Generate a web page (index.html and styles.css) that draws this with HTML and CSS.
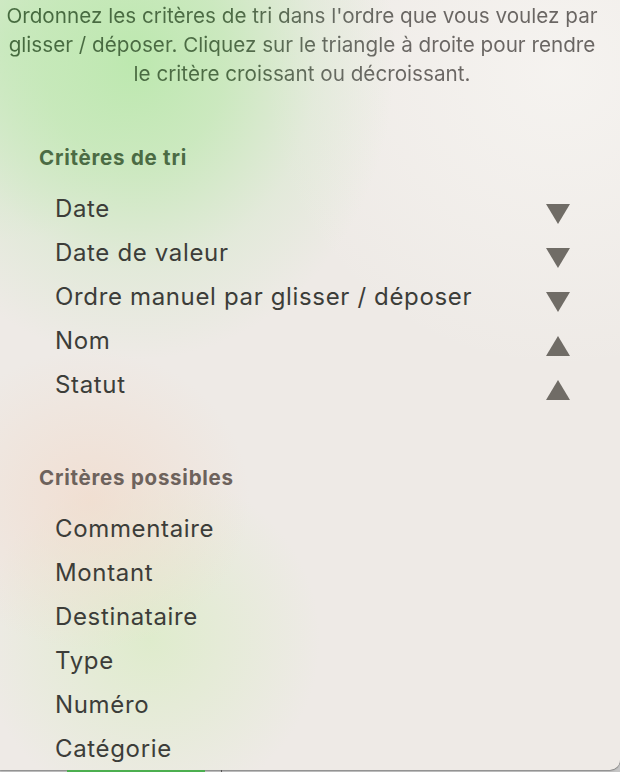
FILE: index.html
```html
<!DOCTYPE html>
<html lang="fr">
<head>
<meta charset="utf-8">
<title>Critères de tri</title>
<link rel="stylesheet" href="styles.css">
</head>
<body>
<div class="panel">
  <p class="intro">Ordonnez les critères de tri dans l'ordre que vous voulez par glisser / déposer. Cliquez sur le triangle à droite pour rendre le critère croissant ou décroissant.</p>

  <section class="group group-active">
    <h2 class="group-title title-active">Critères de tri</h2>
    <ul class="rows">
      <li class="row"><span class="label">Date</span><svg class="tri" viewBox="0 0 24 20" width="24" height="20"><polygon points="0,0 24,0 12,20"/></svg></li>
      <li class="row"><span class="label">Date de valeur</span><svg class="tri" viewBox="0 0 24 20" width="24" height="20"><polygon points="0,0 24,0 12,20"/></svg></li>
      <li class="row"><span class="label">Ordre manuel par glisser / déposer</span><svg class="tri" viewBox="0 0 24 20" width="24" height="20"><polygon points="0,0 24,0 12,20"/></svg></li>
      <li class="row"><span class="label">Nom</span><svg class="tri" viewBox="0 0 24 20" width="24" height="20"><polygon points="12,0 24,20 0,20"/></svg></li>
      <li class="row"><span class="label">Statut</span><svg class="tri" viewBox="0 0 24 20" width="24" height="20"><polygon points="12,0 24,20 0,20"/></svg></li>
    </ul>
  </section>

  <section class="group group-possible">
    <h2 class="group-title title-possible">Critères possibles</h2>
    <ul class="rows">
      <li class="row"><span class="label">Commentaire</span></li>
      <li class="row"><span class="label">Montant</span></li>
      <li class="row"><span class="label">Destinataire</span></li>
      <li class="row"><span class="label">Type</span></li>
      <li class="row"><span class="label">Numéro</span></li>
      <li class="row"><span class="label">Catégorie</span></li>
    </ul>
  </section>
</div>
<div class="under">
  <span class="under-green"></span>
  <span class="under-line"></span>
</div>
</body>
</html>
```
FILE: styles.css
```css
html, body {
  margin: 0;
  padding: 0;
}

body {
  width: 620px;
  height: 772px;
  overflow: hidden;
  background: #c6c6c6;
  font-family: Inter, "Noto Sans", "Liberation Sans", sans-serif;
}

.panel {
  height: 770px;
  box-sizing: border-box;
  overflow: hidden;
  border-radius: 0 0 10px 0;
  box-shadow: 0 0 0 0.5px rgba(0, 0, 0, 0.25), 0 1px 2px rgba(0, 0, 0, 0.2);
  background:
    radial-gradient(ellipse 260px 300px at 135px 60px, rgba(186, 232, 172, 0.95), rgba(190, 232, 176, 0.72) 35%, rgba(200, 232, 190, 0.3) 70%, rgba(200, 232, 190, 0) 100%),
    radial-gradient(ellipse 140px 200px at 10px 40px, rgba(200, 234, 190, 0.7), rgba(200, 234, 190, 0) 100%),
    radial-gradient(ellipse 160px 150px at 90px 500px, rgba(242, 218, 202, 0.7), rgba(242, 218, 202, 0) 100%),
    radial-gradient(ellipse 170px 170px at 150px 640px, rgba(220, 236, 200, 0.85), rgba(220, 236, 200, 0) 100%),
    radial-gradient(ellipse 300px 300px at 560px 70px, rgba(247, 245, 242, 0.8), rgba(247, 245, 242, 0) 100%),
    #eeeae6;
}

.intro {
  margin: 0;
  padding: 1px 18px 0 2px;
  font-size: 20.7px;
  line-height: 29px;
  text-align: center;
  background: linear-gradient(90deg, #456a3e 0, #4d6b45 230px, #666a61 330px, #6a6663 410px);
  -webkit-background-clip: text;
  background-clip: text;
  color: transparent;
}

.group {
  padding-left: 39px;
  padding-right: 50px;
}

.group-active {
  margin-top: 58px;
}

.group-possible {
  margin-top: 59px;
}

.group-title {
  margin: 0;
  font-size: 20.5px;
  line-height: 24px;
  font-weight: 700;
  letter-spacing: 0.75px;
}

.title-active {
  color: #4b6b44;
}

.title-possible {
  color: #6d625c;
}

.rows {
  list-style: none;
  margin: 17px 0 0 0;
  padding: 0 0 0 16px;
}

.row {
  display: flex;
  justify-content: space-between;
  align-items: flex-start;
  height: 44px;
}

.label {
  font-size: 24px;
  line-height: 44px;
  letter-spacing: 0.65px;
  color: #3c3d39;
}

.tri {
  display: block;
  margin-top: 17px;
  fill: #706c66;
}

.under {
  display: flex;
  height: 2px;
}

.under-green {
  margin-left: 67px;
  width: 138px;
  background: #4caf50;
}

.under-line {
  margin-left: 16px;
  width: 1px;
  background: #555555;
}
```
